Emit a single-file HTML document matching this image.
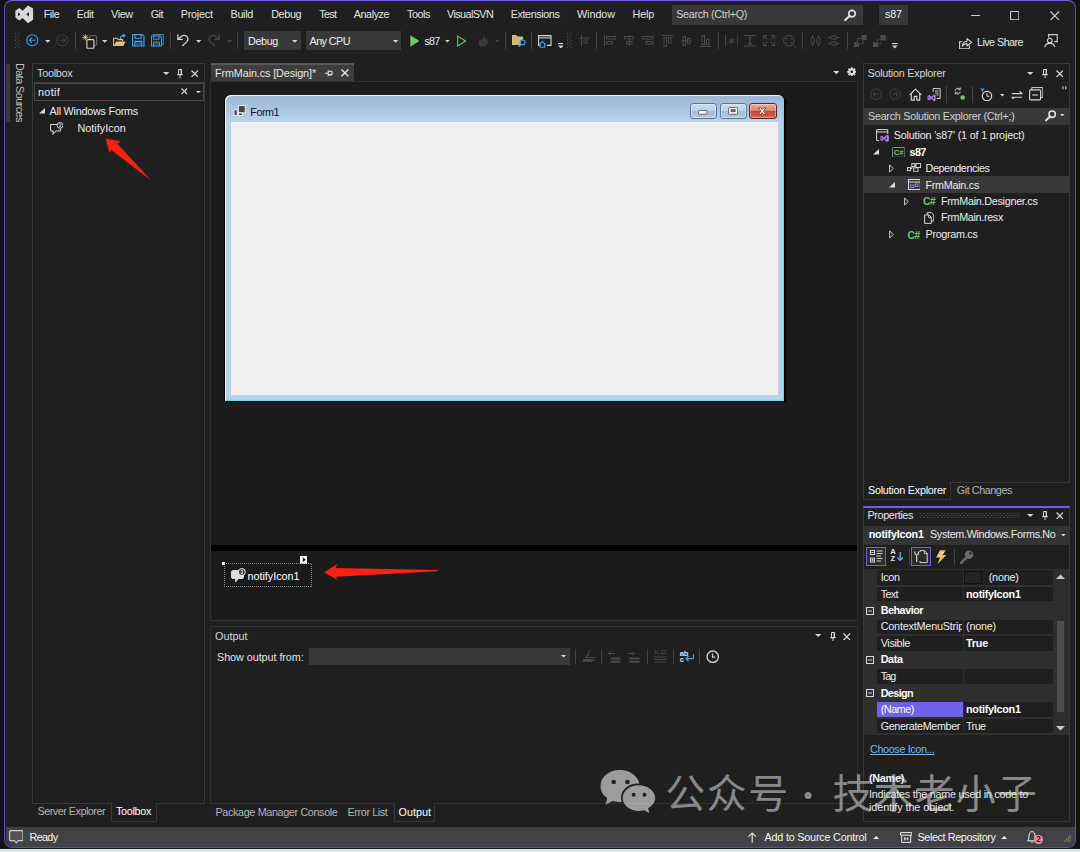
<!DOCTYPE html>
<html><head><meta charset="utf-8"><title>s87 - Microsoft Visual Studio</title>
<style>
html,body{margin:0;padding:0;}
body{width:1080px;height:852px;overflow:hidden;background:#131313;position:relative;font-family:"Liberation Sans","Noto Sans CJK SC",sans-serif;font-size:10.8px;}
div,span,svg{position:absolute;box-sizing:border-box;}
.t{white-space:pre;line-height:16px;height:16px;}
#strip{left:0;top:848.700px;width:1080px;height:3.300px;background:#d9e7ec;}
#win{left:4px;top:0;width:1072px;height:848px;background:#1f1f1f;border:1.600px solid #5b4eb8;border-top:1.200px solid #7160e8;border-radius:8px;}
.box{background:#383838;}
.pnl{border:1px solid #383838;background:#1f1f1f;}
.tab{border:1px solid #383838;border-top:none;background:#1f1f1f;}
.vsep{width:1px;background:#444;}
#status{left:5.5px;top:827px;width:1069px;height:19.6px;background:#424242;border-radius:0 0 6.5px 6.5px;}
.wm{font-family:"Liberation Sans","Noto Sans CJK SC",sans-serif;font-size:40px;line-height:56px;height:56px;white-space:pre;color:rgba(255,255,255,0.47);letter-spacing:1.700px;font-weight:400;}

</style></head>
<body>
<div id="strip"></div>
<div id="win"></div>
<div id="status"></div>

<!-- title bar -->
<div class="box" style="left:671.7px;top:5px;width:191.3px;height:19.5px"></div>
<div class="box" style="left:878.5px;top:5px;width:29.5px;height:19.5px"></div>
<!-- toolbar combos -->
<div class="box" style="left:243.7px;top:31px;width:57px;height:19px"></div>
<div class="box" style="left:306px;top:31px;width:95px;height:19px"></div>

<!-- left strip -->
<div style="left:5.700px;top:63.500px;width:4.400px;height:58.300px;background:#3a3a3a"></div>
<span class="t" style="left:12px;top:63.200px;color:#c4c4c4;transform-origin:0 0;transform:translate(16px,0) rotate(90deg);letter-spacing:-0.550px" id="ds">Data Sources</span>

<!-- toolbox -->
<div class="pnl" style="left:32px;top:63px;width:173px;height:741px"></div>
<div style="left:33px;top:82px;width:171px;height:1px;background:#3d3d3d"></div>
<div style="left:33.5px;top:83px;width:170.5px;height:17.5px;border:1px solid #464646;background:#1f1f1f"></div>
<div class="tab" style="left:110.5px;top:803px;width:46.5px;height:18.5px"></div>

<!-- document -->
<div style="left:211px;top:63px;width:143px;height:17.500px;background:linear-gradient(#585858 0,#585858 2px,#3d3d3d 2.300px,#3d3d3d 100%)"></div>
<div class="pnl" style="left:210px;top:80.500px;width:648px;height:540.500px;background:#1b1b1b;border-color:#303030"></div>
<div style="left:211px;top:544.5px;width:646px;height:6px;background:#000"></div>

<!-- Form1 -->
<div id="form" style="left:224.100px;top:94.800px;width:561.800px;height:307.200px;background:#000;border-radius:7px 7px 0 0;"></div>
<div style="left:225px;top:95px;width:559.400px;height:306.100px;border-radius:6px 6px 0 0;background:linear-gradient(#9cb6d6 0,#a8c1df 12px,#bcd2eb 26px,#b9d1ea 27px,#b9d1ea 100%);box-shadow:inset 1px 1px 0 rgba(255,255,255,0.800),inset -1.200px -1.200px 0 #6bd6f4;"></div>
<div style="left:230.900px;top:121.600px;width:547.400px;height:273.200px;background:#f0f0f0"></div>

<!-- output -->
<div class="pnl" style="left:210px;top:626px;width:648px;height:178px;border-color:#323232"></div>
<div class="box" style="left:309px;top:648px;width:261px;height:17px"></div>
<div class="tab" style="left:393.5px;top:803px;width:41.5px;height:18.5px"></div>

<!-- solution explorer -->
<div class="pnl" style="left:863px;top:63px;width:207px;height:420px"></div>
<div class="box" style="left:864px;top:108px;width:205px;height:17px"></div>
<div style="left:864px;top:176.2px;width:205px;height:16.4px;background:#383838"></div>
<div class="tab" style="left:863px;top:482px;width:88px;height:18px"></div>

<!-- properties -->
<div class="pnl" style="left:863px;top:506px;width:207px;height:316px;border-top:2px solid #7160e8"></div>
<div style="left:864px;top:525.5px;width:205px;height:19px;background:#333"></div>
<div id="grid" style="left:864px;top:569px;width:205px;height:166px;background:#2e2e2e"></div>
<div style="left:877px;top:570.0px;width:85.7px;height:14.7px;background:#1f1f1f"></div>
<div style="left:964px;top:570.0px;width:89px;height:14.7px;background:#1f1f1f"></div>
<div style="left:877px;top:586.5px;width:85.7px;height:14.7px;background:#1f1f1f"></div>
<div style="left:964px;top:586.5px;width:89px;height:14.7px;background:#1f1f1f"></div>
<svg style="left:866px;top:606.9px" width="8" height="8" viewBox="0 0 8 8"><rect x="0.5" y="0.5" width="7" height="7" fill="none" stroke="#d8d8d8" stroke-width="1"/><path d="M2 4H6" stroke="#d8d8d8" stroke-width="1"/></svg>
<div style="left:877px;top:619.5px;width:85.7px;height:14.7px;background:#1f1f1f"></div>
<div style="left:964px;top:619.5px;width:89px;height:14.7px;background:#1f1f1f"></div>
<div style="left:877px;top:636.0px;width:85.7px;height:14.7px;background:#1f1f1f"></div>
<div style="left:964px;top:636.0px;width:89px;height:14.7px;background:#1f1f1f"></div>
<svg style="left:866px;top:656.4px" width="8" height="8" viewBox="0 0 8 8"><rect x="0.5" y="0.5" width="7" height="7" fill="none" stroke="#d8d8d8" stroke-width="1"/><path d="M2 4H6" stroke="#d8d8d8" stroke-width="1"/></svg>
<div style="left:877px;top:669.0px;width:85.7px;height:14.7px;background:#1f1f1f"></div>
<div style="left:964px;top:669.0px;width:89px;height:14.7px;background:#1f1f1f"></div>
<svg style="left:866px;top:689.4px" width="8" height="8" viewBox="0 0 8 8"><rect x="0.5" y="0.5" width="7" height="7" fill="none" stroke="#d8d8d8" stroke-width="1"/><path d="M2 4H6" stroke="#d8d8d8" stroke-width="1"/></svg>
<div style="left:877px;top:702.0px;width:85.7px;height:14.7px;background:#7160e8"></div>
<div style="left:964px;top:702.0px;width:89px;height:14.7px;background:#1f1f1f"></div>
<div style="left:877px;top:718.5px;width:85.7px;height:14.7px;background:#1f1f1f"></div>
<div style="left:964px;top:718.5px;width:89px;height:14.7px;background:#1f1f1f"></div>
<div style="left:964.3px;top:570.6px;width:17.6px;height:13.6px;background:#222;border:1px solid #111"></div>
<svg style="left:1056px;top:574px" width="9" height="5" viewBox="0 0 9 5"><path d="M0 5L4.5 0.5L9 5Z" fill="#c8c8c8"/></svg>
<svg style="left:1056px;top:725.5px" width="9" height="5" viewBox="0 0 9 5"><path d="M0 0L4.5 4.5L9 0Z" fill="#c8c8c8"/></svg>
<div style="left:1056.8px;top:620.5px;width:6.8px;height:91px;background:#4d4d4d"></div>
<svg style="left:15.2px;top:5.1px" width="19" height="19" viewBox="0 0 19 19" ><path d="M0.4 5.8L4.4 3L7.6 5.8L13 0.5L18.1 3.5V14.8L13 18.2L7.6 12.9L4.4 15.5L0.4 12.5Z M3 7.3V11.4L5.3 9.3Z M13.9 6.9L11.3 9.3L13.9 11.8Z" fill="#d9d9d9" fill-rule="evenodd"/></svg>
<svg style="left:844px;top:9px" width="13" height="12" viewBox="0 0 13 12" ><circle cx="8" cy="4.6" r="3.3" fill="none" stroke="#e4e4e4" stroke-width="1.7"/><path d="M5.6 7L1.2 11" stroke="#e4e4e4" stroke-width="2.1" stroke-linecap="round"/></svg>
<svg style="left:970.5px;top:14.8px" width="9" height="1.2" viewBox="0 0 9 1.2" ><rect width="9" height="1.1" fill="#d0d0d0"/></svg>
<svg style="left:1010px;top:11px" width="9.4" height="9.4" viewBox="0 0 9.4 9.4" ><rect x="0.55" y="0.55" width="8.3" height="8.3" rx="0.6" fill="none" stroke="#d0d0d0" stroke-width="1.1"/></svg>
<svg style="left:1050px;top:10.8px" width="9.6" height="9.6" viewBox="0 0 9.6 9.6" ><path d="M0.5 0.5L9.1 9.1M9.1 0.5L0.5 9.1" stroke="#d0d0d0" stroke-width="1.1" fill="none"/></svg>
<svg style="left:15.3px;top:33px" width="5.2" height="15.2" viewBox="0 0 5.2 15.2" ><g fill="#4e4e4e"><rect x="0.00" y="0.00" width="1.1" height="1.1"/><rect x="3.60" y="0.00" width="1.1" height="1.1"/><rect x="1.80" y="1.75" width="1.1" height="1.1"/><rect x="0.00" y="3.50" width="1.1" height="1.1"/><rect x="3.60" y="3.50" width="1.1" height="1.1"/><rect x="1.80" y="5.25" width="1.1" height="1.1"/><rect x="0.00" y="7.00" width="1.1" height="1.1"/><rect x="3.60" y="7.00" width="1.1" height="1.1"/><rect x="1.80" y="8.75" width="1.1" height="1.1"/><rect x="0.00" y="10.50" width="1.1" height="1.1"/><rect x="3.60" y="10.50" width="1.1" height="1.1"/><rect x="1.80" y="12.25" width="1.1" height="1.1"/><rect x="0.00" y="14.00" width="1.1" height="1.1"/><rect x="3.60" y="14.00" width="1.1" height="1.1"/></g></svg>
<svg style="left:26.3px;top:34px" width="12.6" height="12.6" viewBox="0 0 12.6 12.6" ><circle cx="6.3" cy="6.3" r="5.5" fill="none" stroke="#459fe8" stroke-width="1.1"/><path d="M9.3 6.3H3.6M5.9 3.7L3.3 6.3L5.9 8.9" stroke="#459fe8" stroke-width="1.1" fill="none"/></svg>
<svg style="left:45px;top:40px" width="5.4" height="2.7" viewBox="0 0 5.4 2.7" ><path d="M0 0H5.4L2.7 2.7Z" fill="#d6d6d6"/></svg>
<svg style="left:55.7px;top:34px" width="12.6" height="12.6" viewBox="0 0 12.6 12.6" ><circle cx="6.3" cy="6.3" r="5.5" fill="none" stroke="#3e3e3e" stroke-width="1.1"/><path d="M3.3 6.3H9M6.7 3.7L9.3 6.3L6.7 8.9" stroke="#3e3e3e" stroke-width="1.1" fill="none"/></svg>
<div style="left:75px;top:32.3px;width:1px;height:16.700000000000003px;background:#444"></div>
<svg style="left:82px;top:33.5px" width="15.5" height="15" viewBox="0 0 15.5 15" ><rect x="7.6" y="1.8" width="7" height="9.2" rx="1" fill="none" stroke="#6a6a6a" stroke-width="1.1"/><rect x="4.9" y="5.6" width="7" height="8.6" rx="1" fill="#1f1f1f" stroke="#d6d6d6" stroke-width="1.1"/><path d="M3.3 0.3V6.3M0.3 3.3H6.3M1.2 1.2L5.4 5.4M5.4 1.2L1.2 5.4" stroke="#dcc07f" stroke-width="0.9"/></svg>
<svg style="left:101.8px;top:40px" width="5.4" height="2.7" viewBox="0 0 5.4 2.7" ><path d="M0 0H5.4L2.7 2.7Z" fill="#d6d6d6"/></svg>
<svg style="left:112.5px;top:33.5px" width="13.5" height="13" viewBox="0 0 13.5 13" ><path d="M0.6 12V4.3H4.2L5.4 5.6H9.6V7.2" fill="none" stroke="#dcc07f" stroke-width="1.1"/><path d="M0.7 12L3.2 7.4H12.6L10.3 12Z" fill="#dcc07f"/><path d="M7.6 5V3.6Q7.6 1.6 10 1.6H11.2M9.9 0L11.9 1.6L9.9 3.3" stroke="#459fe8" stroke-width="1.2" fill="none"/></svg>
<svg style="left:132px;top:34.4px" width="13" height="13" viewBox="0 0 13 13" ><path d="M0.6 0.6H10.4L12 2.2V12H0.6Z" fill="none" stroke="#459fe8" stroke-width="1.15"/><path d="M3 0.8V4.2H9.2V0.8M2.8 12V7.4H9.8V12" fill="none" stroke="#459fe8" stroke-width="1.1"/><rect x="3.4" y="8" width="5.8" height="3.6" fill="#459fe8" opacity="0.35"/></svg>
<svg style="left:150.8px;top:34.4px" width="13" height="13" viewBox="0 0 13 13" ><path d="M2.4 1.8V0.6H12.3V10.6H11" fill="none" stroke="#459fe8" stroke-width="1.1" opacity="0.75"/><g transform="translate(0,1.6) scale(0.87)"><path d="M0.6 0.6H10.4L12 2.2V12H0.6Z" fill="none" stroke="#459fe8" stroke-width="1.15"/><path d="M3 0.8V4.2H9.2V0.8M2.8 12V7.4H9.8V12" fill="none" stroke="#459fe8" stroke-width="1.1"/><rect x="3.4" y="8" width="5.8" height="3.6" fill="#459fe8" opacity="0.35"/></g></svg>
<div style="left:169.7px;top:32.3px;width:1px;height:16.700000000000003px;background:#444"></div>
<svg style="left:177.4px;top:34.3px" width="12" height="12.5" viewBox="0 0 12 12.5" ><g ><path d="M0.9 0.6V5.4H5.7" fill="none" stroke="#d6d6d6" stroke-width="1.25"/><path d="M1.2 5.2L4.2 2.5Q7 0.3 9.6 2.3Q12 4.6 9.9 7.6L5.2 12" fill="none" stroke="#d6d6d6" stroke-width="1.25"/></g></svg>
<svg style="left:196.2px;top:40px" width="5.4" height="2.7" viewBox="0 0 5.4 2.7" ><path d="M0 0H5.4L2.7 2.7Z" fill="#d6d6d6"/></svg>
<svg style="left:208.2px;top:34.3px" width="12" height="12.5" viewBox="0 0 12 12.5" ><g transform="translate(12,0) scale(-1,1)"><path d="M0.9 0.6V5.4H5.7" fill="none" stroke="#484848" stroke-width="1.25"/><path d="M1.2 5.2L4.2 2.5Q7 0.3 9.6 2.3Q12 4.6 9.9 7.6L5.2 12" fill="none" stroke="#484848" stroke-width="1.25"/></g></svg>
<svg style="left:226.8px;top:40px" width="5.4" height="2.7" viewBox="0 0 5.4 2.7" ><path d="M0 0H5.4L2.7 2.7Z" fill="#484848"/></svg>
<div style="left:237.3px;top:32.3px;width:1px;height:16.700000000000003px;background:#444"></div>
<svg style="left:292px;top:40px" width="5.4" height="2.7" viewBox="0 0 5.4 2.7" ><path d="M0 0H5.4L2.7 2.7Z" fill="#d6d6d6"/></svg>
<svg style="left:392.7px;top:40px" width="5.4" height="2.7" viewBox="0 0 5.4 2.7" ><path d="M0 0H5.4L2.7 2.7Z" fill="#d6d6d6"/></svg>
<svg style="left:409.5px;top:34.5px" width="9.6" height="12" viewBox="0 0 9.6 12" ><path d="M0.3 0.3L9.3 6L0.3 11.7Z" fill="#6cc96c"/></svg>
<svg style="left:445px;top:40px" width="4.8" height="2.5" viewBox="0 0 4.8 2.5" ><path d="M0 0H4.8L2.4 2.5Z" fill="#d6d6d6"/></svg>
<svg style="left:457.3px;top:34.5px" width="9.8" height="12" viewBox="0 0 9.8 12" ><path d="M0.7 1.1L8.6 6L0.7 10.9Z" fill="none" stroke="#6cc96c" stroke-width="1.1"/></svg>
<svg style="left:476.8px;top:34px" width="12" height="13" viewBox="0 0 12 13" ><path d="M6.2 0.4Q7.4 3 5.4 4.8Q4.4 5.8 4.6 7.2Q3.3 6.4 3.4 4.7Q0.7 7 1.4 9.7Q2.3 12.5 6 12.6Q10 12.4 10.7 8.8Q11.2 5.6 9 3.6Q9.1 5 8.2 5.6Q8.6 2.4 6.2 0.4Z" fill="#3a3a3a"/></svg>
<svg style="left:494.8px;top:40px" width="4.8" height="2.5" viewBox="0 0 4.8 2.5" ><path d="M0 0H4.8L2.4 2.5Z" fill="#484848"/></svg>
<div style="left:505.2px;top:32.3px;width:1px;height:16.700000000000003px;background:#444"></div>
<svg style="left:512.3px;top:35px" width="14" height="12.5" viewBox="0 0 14 12.5" ><path d="M0.5 10V0.6H4.4L5.6 2H10.6V10Z" fill="#dcc07f" opacity="0.95"/><path d="M0.5 10V0.6H4.4L5.6 2H10.6V4" fill="none" stroke="#dcc07f" stroke-width="1"/><circle cx="10.6" cy="7.4" r="2.4" fill="#1f1f1f" stroke="#459fe8" stroke-width="1.2"/><path d="M8.9 9.2L6.6 11.8" stroke="#459fe8" stroke-width="1.4"/></svg>
<div style="left:531.2px;top:32.3px;width:1px;height:16.700000000000003px;background:#444"></div>
<svg style="left:537.8px;top:35.3px" width="14" height="13" viewBox="0 0 14 13" ><path d="M3 10.4H0.6V0.6H13V10.4H9" fill="none" stroke="#d6d6d6" stroke-width="1.1"/><path d="M0.6 2.9H13" stroke="#d6d6d6" stroke-width="1"/><path d="M1.2 9.5L4.4 6.6L7.6 9.5M2.1 8.9V12.3H6.7V8.9" fill="#1f1f1f" stroke="#459fe8" stroke-width="1.1"/></svg>
<svg style="left:557.5px;top:42.8px" width="5.6" height="5.6" viewBox="0 0 5.6 5.6" ><rect x="0" y="0" width="5.6" height="1.1" fill="#d6d6d6"/><path d="M0 2.6H5.6L2.8 5.5Z" fill="#d6d6d6"/></svg>
<svg style="left:566.8px;top:33px" width="5.2" height="15.2" viewBox="0 0 5.2 15.2" ><g fill="#4e4e4e"><rect x="0.00" y="0.00" width="1.1" height="1.1"/><rect x="3.60" y="0.00" width="1.1" height="1.1"/><rect x="1.80" y="1.75" width="1.1" height="1.1"/><rect x="0.00" y="3.50" width="1.1" height="1.1"/><rect x="3.60" y="3.50" width="1.1" height="1.1"/><rect x="1.80" y="5.25" width="1.1" height="1.1"/><rect x="0.00" y="7.00" width="1.1" height="1.1"/><rect x="3.60" y="7.00" width="1.1" height="1.1"/><rect x="1.80" y="8.75" width="1.1" height="1.1"/><rect x="0.00" y="10.50" width="1.1" height="1.1"/><rect x="3.60" y="10.50" width="1.1" height="1.1"/><rect x="1.80" y="12.25" width="1.1" height="1.1"/><rect x="0.00" y="14.00" width="1.1" height="1.1"/><rect x="3.60" y="14.00" width="1.1" height="1.1"/></g></svg>
<svg style="left:578.5px;top:35px" width="11" height="11" viewBox="0 0 11 11" ><g fill="none" stroke="#4b4b4b" stroke-width="1"><path d="M2.5 0V11M0 3H11"/><rect x="5" y="5" width="3" height="3"/></g></svg>
<div style="left:596.3px;top:32.3px;width:1px;height:16.700000000000003px;background:#444"></div>
<svg style="left:603.5px;top:35px" width="12.5" height="11" viewBox="0 0 12.5 11" ><g fill="none" stroke="#4b4b4b" stroke-width="1"><path d="M0.5 0V11"/><rect x="2.5" y="1.5" width="9.5" height="2.5"/><rect x="2.5" y="6.5" width="6" height="2.5"/></g></svg>
<svg style="left:623.5px;top:35px" width="10.5" height="11" viewBox="0 0 10.5 11" ><g fill="none" stroke="#4b4b4b" stroke-width="1"><path d="M5.2 0V11"/><rect x="0.5" y="1.5" width="9.5" height="2.5"/><rect x="2.5" y="6.5" width="5.5" height="2.5"/></g></svg>
<svg style="left:641.8px;top:35px" width="12.5" height="11" viewBox="0 0 12.5 11" ><g fill="none" stroke="#4b4b4b" stroke-width="1"><path d="M12 0V11"/><rect x="0.5" y="1.5" width="9.5" height="2.5"/><rect x="4" y="6.5" width="6" height="2.5"/></g></svg>
<svg style="left:661.7px;top:34.5px" width="11" height="12" viewBox="0 0 11 12" ><g fill="none" stroke="#4b4b4b" stroke-width="1"><path d="M0 0.5H11"/><rect x="2" y="2.5" width="2.5" height="9"/><rect x="6.5" y="2.5" width="2.5" height="5.5"/></g></svg>
<svg style="left:681.3px;top:34.5px" width="11" height="12" viewBox="0 0 11 12" ><g fill="none" stroke="#4b4b4b" stroke-width="1"><path d="M0 6H11"/><rect x="2" y="1.5" width="2.5" height="9"/><rect x="6.5" y="3.5" width="2.5" height="5"/></g></svg>
<svg style="left:699.8px;top:34.5px" width="11" height="12" viewBox="0 0 11 12" ><g fill="none" stroke="#4b4b4b" stroke-width="1"><path d="M0 11.5H11"/><rect x="2" y="0.5" width="2.5" height="9"/><rect x="6.5" y="4" width="2.5" height="5.5"/></g></svg>
<div style="left:718.2px;top:32.3px;width:1px;height:16.700000000000003px;background:#444"></div>
<svg style="left:724.8px;top:35px" width="13.4" height="11.5" viewBox="0 0 13.4 11.5" ><g fill="none" stroke="#4b4b4b" stroke-width="1"><path d="M0.5 0V11.5M12.9 0V11.5M6.7 2.5V9M3.9 4.2L9.5 7.4M9.5 4.2L3.9 7.4"/></g></svg>
<svg style="left:744px;top:35.3px" width="12" height="11.4" viewBox="0 0 12 11.4" ><g fill="none" stroke="#4b4b4b" stroke-width="1"><path d="M0 0.5H12M0 10.9H12M6 1.5V10M4 3.5L6 1.5L8 3.5M4 8L6 10L8 8"/></g></svg>
<svg style="left:763.2px;top:35px" width="12.2" height="11" viewBox="0 0 12.2 11" ><g fill="none" stroke="#4b4b4b" stroke-width="1"><path d="M0.5 4V0.5H4M8.2 0.5H11.7V4M11.7 7V10.5H8.2M4 10.5H0.5V7M1 1L4.3 4.3M11.2 1L7.9 4.3M1 10L4.3 6.7M11.2 10L7.9 6.7"/></g></svg>
<svg style="left:782.8px;top:34.5px" width="13.2" height="13" viewBox="0 0 13.2 13" ><g fill="none" stroke="#4b4b4b" stroke-width="1"><circle cx="5.8" cy="5.8" r="5.2"/><path d="M9.6 9.6L13 13M3.4 4.6V3.4H4.6M7 3.4H8.2V4.6M8.2 7V8.2H7M4.6 8.2H3.4V7"/></g></svg>
<div style="left:801.7px;top:32.3px;width:1px;height:16.700000000000003px;background:#444"></div>
<svg style="left:809.8px;top:34.5px" width="11" height="11.5" viewBox="0 0 11 11.5" ><g fill="none" stroke="#4b4b4b" stroke-width="1"><rect x="1" y="2.5" width="3" height="6.5" rx="1"/><rect x="7" y="2.5" width="3" height="6.5" rx="1"/><path d="M2.5 0V2.5M2.5 9V11.5M8.5 0V2.5M8.5 9V11.5"/></g></svg>
<svg style="left:828px;top:34.8px" width="11.5" height="11" viewBox="0 0 11.5 11" ><g fill="none" stroke="#4b4b4b" stroke-width="1"><rect x="2.5" y="1" width="6.5" height="3" rx="1"/><rect x="2.5" y="7" width="6.5" height="3" rx="1"/><path d="M0 2.5H2.5M9 2.5H11.5M0 8.500H2.5M9 8.5H11.5"/></g></svg>
<div style="left:846.6px;top:32.3px;width:1px;height:16.700000000000003px;background:#444"></div>
<svg style="left:853.6px;top:34.5px" width="13" height="12.5" viewBox="0 0 13 12.5" ><rect x="0" y="7.2" width="5" height="5" fill="#4b4b4b"/><rect x="7.6" y="0" width="5" height="5" fill="#4b4b4b"/><rect x="3.6" y="3.6" width="5.4" height="5.4" fill="#1f1f1f" stroke="#4b4b4b" stroke-width="1"/></svg>
<svg style="left:872.6px;top:34.5px" width="13" height="12.5" viewBox="0 0 13 12.5" ><rect x="0" y="7.2" width="5.4" height="5.4" fill="#4b4b4b"/><rect x="7.4" y="0" width="5.4" height="5.4" fill="#4b4b4b"/><path d="M4.5 6V4.5H6M7.5 7.500V9H6" fill="none" stroke="#4b4b4b" stroke-width="0.9"/></svg>
<svg style="left:892.2px;top:43px" width="5.6" height="5.6" viewBox="0 0 5.6 5.6" ><rect x="0" y="0" width="5.6" height="1.1" fill="#d6d6d6"/><path d="M0 2.6H5.6L2.8 5.5Z" fill="#d6d6d6"/></svg>
<svg style="left:958.6px;top:36.8px" width="13.6" height="12.4" viewBox="0 0 13.6 12.4" ><path d="M3.4 4.8H0.6V11.8H10.4V8.6" fill="none" stroke="#d6d6d6" stroke-width="1.1"/><path d="M3.3 9.3Q3.8 4.6 8 4.3V1.6L12.6 5.3L8 9V6.6Q5 6.5 3.3 9.300Z" fill="none" stroke="#d6d6d6" stroke-width="1.1" stroke-linejoin="round"/></svg>
<svg style="left:1044px;top:34.3px" width="14" height="13.5" viewBox="0 0 14 13.5" ><path d="M4.6 3.6V0.6H13.2V7.6H10.3" fill="none" stroke="#d6d6d6" stroke-width="1.1"/><circle cx="5.8" cy="6.6" r="2.3" fill="#1f1f1f" stroke="#d6d6d6" stroke-width="1.1"/><path d="M0.8 13.2Q1.4 9.4 5.8 9.4Q10.2 9.4 10.800 13.2" fill="none" stroke="#d6d6d6" stroke-width="1.1"/></svg>
<svg style="left:162.5px;top:71.7px" width="6.4" height="3" viewBox="0 0 6.4 3" ><path d="M0 0H6.4L3.2 3Z" fill="#d6d6d6"/></svg>
<svg style="left:177.2px;top:69px" width="6" height="9.5" viewBox="0 0 6 9.5" ><path d="M1.5 0.5H4.5V5.5H1.5ZM0 5.7H6M3 5.7V9.5" stroke="#d6d6d6" stroke-width="1" fill="none"/><path d="M3.6 0.5H4.6V5.5H3.6Z" fill="#d6d6d6"/></svg>
<svg style="left:190.8px;top:69.9px" width="7.6" height="7.6" viewBox="0 0 7.6 7.6" ><path d="M0.5 0.5L7.1 7.1M7.1 0.5L0.5 7.1" stroke="#d6d6d6" stroke-width="1.25" fill="none"/></svg>
<svg style="left:1027.3px;top:71.5px" width="6.4" height="3" viewBox="0 0 6.4 3" ><path d="M0 0H6.4L3.2 3Z" fill="#d6d6d6"/></svg>
<svg style="left:1041.7px;top:68.8px" width="6" height="9.5" viewBox="0 0 6 9.5" ><path d="M1.5 0.5H4.5V5.5H1.5ZM0 5.7H6M3 5.7V9.5" stroke="#d6d6d6" stroke-width="1" fill="none"/><path d="M3.6 0.5H4.6V5.5H3.6Z" fill="#d6d6d6"/></svg>
<svg style="left:1055.5px;top:69.7px" width="7.6" height="7.6" viewBox="0 0 7.6 7.6" ><path d="M0.5 0.5L7.1 7.1M7.1 0.5L0.5 7.1" stroke="#d6d6d6" stroke-width="1.25" fill="none"/></svg>
<svg style="left:1027.3px;top:513.5px" width="6.4" height="3" viewBox="0 0 6.4 3" ><path d="M0 0H6.4L3.2 3Z" fill="#d6d6d6"/></svg>
<svg style="left:1041.7px;top:510.8px" width="6" height="9.5" viewBox="0 0 6 9.5" ><path d="M1.5 0.5H4.5V5.5H1.5ZM0 5.7H6M3 5.7V9.5" stroke="#d6d6d6" stroke-width="1" fill="none"/><path d="M3.6 0.5H4.6V5.5H3.6Z" fill="#d6d6d6"/></svg>
<svg style="left:1055.5px;top:511.7px" width="7.6" height="7.6" viewBox="0 0 7.6 7.6" ><path d="M0.5 0.5L7.1 7.1M7.1 0.5L0.5 7.1" stroke="#d6d6d6" stroke-width="1.25" fill="none"/></svg>
<svg style="left:815.3px;top:634.3000000000001px" width="6.4" height="3" viewBox="0 0 6.4 3" ><path d="M0 0H6.4L3.2 3Z" fill="#d6d6d6"/></svg>
<svg style="left:829.8px;top:631.6px" width="6" height="9.5" viewBox="0 0 6 9.5" ><path d="M1.5 0.5H4.5V5.5H1.5ZM0 5.7H6M3 5.7V9.5" stroke="#d6d6d6" stroke-width="1" fill="none"/><path d="M3.6 0.5H4.6V5.5H3.6Z" fill="#d6d6d6"/></svg>
<svg style="left:843.2px;top:632.5px" width="7.6" height="7.6" viewBox="0 0 7.6 7.6" ><path d="M0.5 0.5L7.1 7.1M7.1 0.5L0.5 7.1" stroke="#d6d6d6" stroke-width="1.25" fill="none"/></svg>
<svg style="left:181.4px;top:88.2px" width="6.6" height="6.6" viewBox="0 0 6.6 6.6" ><path d="M0.5 0.5L6.1 6.1M6.1 0.5L0.5 6.1" stroke="#d6d6d6" stroke-width="1.15" fill="none"/></svg>
<svg style="left:195.5px;top:90.7px" width="5" height="2.3" viewBox="0 0 5 2.3" ><path d="M0 0H5L2.5 2.3Z" fill="#d6d6d6"/></svg>
<svg style="left:39px;top:108.4px" width="6" height="5.6" viewBox="0 0 6 5.6" ><path d="M6 0V5.600H0Z" fill="#d8d8d8"/></svg>
<svg style="left:50px;top:122px" width="13.4" height="13" viewBox="0 0 13.4 13" ><path d="M7 2.4H1.6Q0.600 2.400 0.600 3.400V8Q0.600 9 1.600 9H3V12L6 9H9.4Q10.400 9 10.400 8V7" fill="none" stroke="#d6d6d6" stroke-width="1.05"/><circle cx="10" cy="3.4" r="2.9" fill="#1f1f1f" stroke="#d6d6d6" stroke-width="1"/><path d="M9 2.700Q9.100 1.800 10 1.800Q11 1.800 11 2.600Q11 3.200 9.200 4.800H11.200" fill="none" stroke="#d6d6d6" stroke-width="0.8"/></svg>
<svg style="left:325px;top:70.2px" width="7.6" height="6.6" viewBox="0 0 7.6 6.6" ><path d="M0 3.2H3.200M3.200 0.300V6.200M3.200 1.300H7V5H3.200" fill="none" stroke="#e8e8e8" stroke-width="1"/><path d="M3.2 4.200H7V5H3.200Z" fill="#e8e8e8"/></svg>
<svg style="left:341px;top:69.3px" width="7.8" height="7.8" viewBox="0 0 7.8 7.8" ><path d="M0.5 0.5L7.3 7.3M7.3 0.5L0.5 7.3" stroke="#ececec" stroke-width="1.3" fill="none"/></svg>
<svg style="left:832.6px;top:71.2px" width="6.6" height="3.2" viewBox="0 0 6.6 3.2" ><path d="M0 0H6.6L3.3 3.2Z" fill="#d6d6d6"/></svg>
<svg style="left:846.7px;top:66.6px" width="9.6" height="9.6" viewBox="0 0 9.6 9.6" ><circle cx="4.800" cy="4.800" r="2.450" fill="none" stroke="#d6d6d6" stroke-width="2.300"/><g stroke="#d6d6d6" stroke-width="1.700"><path d="M4.800 0.200V2M4.800 7.600V9.400M0.200 4.800H2M7.600 4.800H9.400M1.550 1.550L2.800 2.800M6.800 6.800L8.050 8.050M8.050 1.550L6.800 2.800M1.550 8.050L2.800 6.800"/></g></svg>
<svg style="left:233.3px;top:105px" width="13" height="12" viewBox="0 0 13 12" ><g stroke="#f4f4f4" stroke-width="0.9" fill="#444"><rect x="5.400" y="0.600" width="6.800" height="7.200"/><rect x="1" y="4.800" width="3.200" height="5.600"/><rect x="5.600" y="8" width="3.800" height="2.600"/></g></svg>
<div style="left:690.3px;top:103.2px;width:27.2px;height:15.6px;border:1px solid #62768f;border-radius:3px;background:linear-gradient(#cbdbee 0,#bccfe7 46%,#a3bcd9 50%,#b4cae4 100%);box-shadow:inset 0 0 0 0.8px rgba(255,255,255,0.45)"></div>
<div style="left:719.6px;top:103.2px;width:27.1px;height:15.6px;border:1px solid #62768f;border-radius:3px;background:linear-gradient(#cbdbee 0,#bccfe7 46%,#a3bcd9 50%,#b4cae4 100%);box-shadow:inset 0 0 0 0.8px rgba(255,255,255,0.45)"></div>
<div style="left:749px;top:103.2px;width:28px;height:15.6px;border:1px solid #5c2430;border-radius:3px;background:linear-gradient(#e6b0a4 0,#dc8876 46%,#c7432c 50%,#d9694f 100%);box-shadow:inset 0 0 0 0.8px rgba(255,255,255,0.45)"></div>
<svg style="left:698.4px;top:110px" width="9.6" height="4.8" viewBox="0 0 9.6 4.8" ><rect x="0.500" y="0.500" width="8.600" height="3.800" rx="1" fill="#f4f4f4" stroke="#55606e" stroke-width="0.9"/></svg>
<svg style="left:728px;top:107px" width="10.2" height="7.8" viewBox="0 0 10.2 7.8" ><rect x="0.500" y="0.500" width="9.200" height="6.800" rx="1" fill="#f4f4f4" stroke="#55606e" stroke-width="0.900"/><rect x="3" y="2.600" width="4.200" height="2.200" fill="#55709a" stroke="#3c4a64" stroke-width="0.600"/></svg>
<svg style="left:757.3px;top:106.8px" width="10.4" height="8.2" viewBox="0 0 10.4 8.2" ><path d="M1.400 0.800H3.900L5.200 2.600L6.500 0.800H9L6.500 4.100L9 7.400H6.500L5.200 5.600L3.900 7.400H1.400L3.900 4.100Z" fill="#f8f8f8" stroke="#6a3030" stroke-width="0.800" stroke-linejoin="round"/></svg>
<div style="left:223.700px;top:563.200px;width:88px;height:23.400px;background-image:linear-gradient(90deg,#a8a8a8 50%,transparent 50%),linear-gradient(90deg,#a8a8a8 50%,transparent 50%),linear-gradient(0deg,#a8a8a8 50%,transparent 50%),linear-gradient(0deg,#a8a8a8 50%,transparent 50%);background-size:2px 1px,2px 1px,1px 2px,1px 2px;background-position:0 0,0 100%,0 0,100% 0;background-repeat:repeat-x,repeat-x,repeat-y,repeat-y;opacity:0.800"></div>
<div style="left:222.200px;top:561.800px;width:3px;height:3px;background:#fff"></div>
<svg style="left:299.7px;top:556.2px" width="7.6" height="7.6" viewBox="0 0 7.6 7.6" ><rect width="7.600" height="7.600" fill="#fff"/><path d="M2.800 1.500L5.800 3.800L2.800 6.100Z" fill="#000"/></svg>
<svg style="left:230.6px;top:567.8px" width="15" height="14.5" viewBox="0 0 15 14.5" ><path d="M2 2.500H11Q12.500 2.500 12.500 4V9Q12.500 10.500 11 10.500H7.500L4.600 13.800V10.500H2Q0.500 10.500 0.500 9V4Q0.500 2.500 2 2.500Z" fill="#dcdcdc" stroke="#f4f4f4" stroke-width="0.800"/><circle cx="10.800" cy="4" r="3.500" fill="#333" stroke="#f4f4f4" stroke-width="1"/><path d="M9.800 3.300Q9.900 2.300 10.800 2.300Q11.800 2.300 11.800 3.100Q11.800 3.700 10 5.500H12" fill="none" stroke="#f0f0f0" stroke-width="0.800"/></svg>
<svg style="left:561.3px;top:655.4px" width="5.2" height="2.6" viewBox="0 0 5.2 2.6" ><path d="M0 0H5.2L2.6 2.6Z" fill="#d6d6d6"/></svg>
<div style="left:575.3px;top:649.2px;width:1px;height:15.199999999999932px;background:#444"></div>
<svg style="left:582.5px;top:650px" width="12.5" height="13" viewBox="0 0 12.5 13" ><g fill="none" stroke="#4b4b4b" stroke-width="1"><path d="M3.500 7V5.500H5.500V2.500Q5.500 0.500 7.500 0.500M2 7.500H12M0.500 10H12" /><rect x="0.500" y="9.500" width="8.500" height="2" fill="#4b4b4b"/></g></svg>
<div style="left:601.3px;top:649.2px;width:1px;height:15.199999999999932px;background:#444"></div>
<svg style="left:608px;top:650.5px" width="12.5" height="12.5" viewBox="0 0 12.5 12.5" ><g fill="none" stroke="#4b4b4b" stroke-width="1"><path d="M0.500 2.500H7M2.500 0.500L0.500 2.500L2.500 4.500"/><rect x="3" y="7" width="9" height="1" fill="#4b4b4b"/><rect x="3" y="10.200" width="9" height="1" fill="#4b4b4b"/></g></svg>
<svg style="left:627px;top:650.5px" width="12.5" height="12.5" viewBox="0 0 12.5 12.5" ><g fill="none" stroke="#4b4b4b" stroke-width="1"><path d="M1 2.500H7.500M5.500 0.500L7.500 2.500L5.500 4.500"/><rect x="3" y="7" width="9" height="1" fill="#4b4b4b"/><rect x="3" y="10.200" width="9" height="1" fill="#4b4b4b"/></g></svg>
<div style="left:646.7px;top:649.2px;width:1px;height:15.199999999999932px;background:#444"></div>
<svg style="left:654.2px;top:650px" width="12.5" height="13" viewBox="0 0 12.5 13" ><g fill="none" stroke="#4b4b4b" stroke-width="1"><path d="M0.500 0.500L4.500 4.500M4.500 0.500L0.500 4.500M6.500 1H12.500M6.500 3.500H12.500M0 7H12.500M0 9.500H12.500M0 12H12.500"/></g></svg>
<div style="left:672.5px;top:649.2px;width:1px;height:15.199999999999932px;background:#444"></div>
<span class="t" style="left:679.800px;top:649.200px;font-size:7.500px;font-weight:bold;color:#e0e0e0;letter-spacing:-0.200px;line-height:10px;height:10px">ab</span>
<span class="t" style="left:679.800px;top:654.600px;font-size:7.500px;font-weight:bold;color:#e0e0e0;line-height:10px;height:10px">c</span>
<svg style="left:684.5px;top:654.2px" width="9.5" height="8.5" viewBox="0 0 9.5 8.5" ><path d="M8.600 0V4.600H1.200M3.600 2L1 4.600L3.600 7.200" fill="none" stroke="#459fe8" stroke-width="1.300"/></svg>
<div style="left:698.7px;top:649.2px;width:1px;height:15.199999999999932px;background:#444"></div>
<svg style="left:705.8px;top:649.6px" width="13.4" height="13.4" viewBox="0 0 13.4 13.4" ><circle cx="6.700" cy="6.700" r="5.700" fill="none" stroke="#cfcfcf" stroke-width="1.400"/><path d="M6.500 3.500V7.200H9.200" fill="none" stroke="#cfcfcf" stroke-width="1.200"/></svg>
<svg style="left:870.3px;top:88.3px" width="12.2" height="12.2" viewBox="0 0 12.2 12.2" ><circle cx="6.100" cy="6.100" r="5.300" fill="none" stroke="#414141" stroke-width="1"/><path d="M9 6.100H3.300M5.600 3.600L3.100 6.100L5.600 8.600" stroke="#414141" stroke-width="1" fill="none"/></svg>
<svg style="left:888.9px;top:88.3px" width="12.2" height="12.2" viewBox="0 0 12.2 12.2" ><circle cx="6.100" cy="6.100" r="5.300" fill="none" stroke="#414141" stroke-width="1"/><path d="M3.300 6.100H9M6.700 3.600L9.200 6.100L6.700 8.600" stroke="#414141" stroke-width="1" fill="none"/></svg>
<svg style="left:908.5px;top:88px" width="13" height="12.8" viewBox="0 0 13 12.8" ><path d="M0.700 6.900L6.500 1.100L12.300 6.900M2.300 5.800V12.200H5.200V8.400H7.800V12.200H10.700V5.800" fill="none" stroke="#d6d6d6" stroke-width="1.150" stroke-linejoin="round"/></svg>
<svg style="left:927px;top:88px" width="14" height="14" viewBox="0 0 14 14" ><path d="M6.200 4V0.600H13.200V10.400H9.600" fill="none" stroke="#d6d6d6" stroke-width="1"/><path d="M8 3H11.600M8 5H11.600M9.500 7H11.600" stroke="#d6d6d6" stroke-width="0.900"/><path d="M0.500 8L2.300 7L4.300 8.800L7 6.200L8.600 7V12.500L7 13.400L4.300 10.800L2.300 12.500L0.500 11.600Z M1.600 8.800V10.800L2.900 9.800Z M7 8.300L5.300 9.800L7 11.300Z" fill="#a77be6" fill-rule="evenodd"/></svg>
<div style="left:946.2px;top:86.4px;width:1px;height:16.39999999999999px;background:#444"></div>
<svg style="left:953.5px;top:87.4px" width="12" height="13" viewBox="0 0 12 13" ><path d="M1.300 3.800A2.700 2.700 0 0 1 6 2.200M6.200 4.800A2.700 2.700 0 0 1 1.500 6" fill="none" stroke="#d6d6d6" stroke-width="1"/><path d="M6.300 0.400V2.700H4M1.200 7.600V5.300H3.500" fill="none" stroke="#d6d6d6" stroke-width="0.800"/><circle cx="8.700" cy="10.500" r="2.300" fill="#6cc96c"/></svg>
<div style="left:972.3px;top:86.4px;width:1px;height:16.39999999999999px;background:#444"></div>
<svg style="left:980.4px;top:87.6px" width="13" height="13.5" viewBox="0 0 13 13.5" ><circle cx="7" cy="8" r="4.700" fill="none" stroke="#d6d6d6" stroke-width="1.150"/><path d="M7 5.300V8.300H9.300" fill="none" stroke="#d6d6d6" stroke-width="1"/><path d="M0.200 0.500H4.600L3 2.500V4.300L1.800 3.600V2.500Z" fill="#459fe8"/></svg>
<svg style="left:999.6px;top:94.1px" width="4.8" height="2.5" viewBox="0 0 4.8 2.5" ><path d="M0 0H4.8L2.4 2.5Z" fill="#d6d6d6"/></svg>
<svg style="left:1010.6px;top:90.6px" width="12" height="8.8" viewBox="0 0 12 8.8" ><path d="M0.800 2.600H11.400M8.600 0.300L11.400 2.600M11.200 6.200H0.600M3.400 8.500L0.600 6.200" fill="none" stroke="#d6d6d6" stroke-width="1.100"/></svg>
<svg style="left:1029px;top:87.2px" width="14.4" height="13.6" viewBox="0 0 14.4 13.6" ><path d="M2.800 2.800V0.600H13.800V10.400H11.600" fill="none" stroke="#d6d6d6" stroke-width="1"/><rect x="0.600" y="2.900" width="11" height="10" rx="1" fill="#1f1f1f" stroke="#d6d6d6" stroke-width="1.150"/><path d="M3.300 8H9" stroke="#d6d6d6" stroke-width="1.100"/></svg>
<svg style="left:1061.8px;top:86.2px" width="5" height="3.4" viewBox="0 0 5 3.4" ><path d="M0.900 0.200V3.200M3.800 0.200V3.200" stroke="#d6d6d6" stroke-width="1.100"/></svg>
<svg style="left:1044.6px;top:110.4px" width="11.4" height="11.4" viewBox="0 0 11.4 11.4" ><circle cx="7.200" cy="4.200" r="3.200" fill="none" stroke="#e4e4e4" stroke-width="1.600"/><path d="M5 6.500L1 10.400" stroke="#e4e4e4" stroke-width="2" stroke-linecap="round"/></svg>
<svg style="left:1060.2px;top:114.1px" width="4.6" height="2.4" viewBox="0 0 4.6 2.4" ><path d="M0 0H4.6L2.3 2.4Z" fill="#d6d6d6"/></svg>
<svg style="left:876.4px;top:129px" width="13.4" height="13" viewBox="0 0 13.4 13" ><path d="M0.600 9.600V0.600H11.800V5.200" fill="none" stroke="#d6d6d6" stroke-width="1"/><path d="M0.600 3H11.800" stroke="#d6d6d6" stroke-width="1"/><path d="M0.600 9.600V11.400H3" fill="none" stroke="#d6d6d6" stroke-width="1"/><path d="M4.400 7.600L6 6.800L8 8.600L10.900 5.800L12.900 6.700V12L10.900 13L8 10.300L6 12L4.400 11.300Z M5.400 8.600V10.400L6.600 9.500Z M10.900 8L9.100 9.500L10.900 11Z" fill="#a77be6" fill-rule="evenodd"/></svg>
<svg style="left:873.3px;top:149.4px" width="6" height="5.6" viewBox="0 0 6 5.6" ><path d="M6 0V5.600H0Z" fill="#d8d8d8"/></svg>
<svg style="left:891.7px;top:146.5px" width="13.4" height="10.8" viewBox="0 0 13.4 10.8" ><rect x="0.500" y="0.500" width="12.400" height="9.800" rx="1" fill="none" stroke="#8a8a8a" stroke-width="1"/></svg>
<span class="t" style="left:893.800px;top:144.600px;font-size:7.800px;font-weight:bold;color:#6cc96c;letter-spacing:-0.300px">C#</span>
<svg style="left:888.8px;top:163.5px" width="5" height="9" viewBox="0 0 5 9" ><path d="M0.6 0.9L4.2 4.5L0.6 8.100Z" fill="none" stroke="#d0d0d0" stroke-width="1"/></svg>
<svg style="left:907px;top:162.8px" width="14.2" height="9.4" viewBox="0 0 14.2 9.4" ><g fill="none" stroke="#d6d6d6" stroke-width="1"><rect x="0.500" y="4.600" width="3" height="3"/><rect x="4.800" y="0.600" width="3" height="3"/><rect x="9" y="0.500" width="4.600" height="4"/><rect x="6.800" y="4.800" width="4.200" height="4"/><path d="M3.500 5.500H5V3.600M7.800 2.500H9"/></g></svg>
<svg style="left:888.7px;top:182.1px" width="6" height="5.6" viewBox="0 0 6 5.6" ><path d="M6 0V5.600H0Z" fill="#d8d8d8"/></svg>
<svg style="left:907.6px;top:178.9px" width="12.8" height="11" viewBox="0 0 12.8 11" ><rect x="0.500" y="0.500" width="11.800" height="10" fill="none" stroke="#d6d6d6" stroke-width="1"/><path d="M0.500 3H12.300" stroke="#d6d6d6" stroke-width="1"/><rect x="2.400" y="6" width="3.400" height="2.600" fill="none" stroke="#a77be6" stroke-width="0.900"/><rect x="7.400" y="5" width="2.600" height="2.600" fill="none" stroke="#a77be6" stroke-width="0.900"/></svg>
<svg style="left:903.9px;top:196.7px" width="5" height="9" viewBox="0 0 5 9" ><path d="M0.6 0.9L4.2 4.5L0.6 8.100Z" fill="none" stroke="#d0d0d0" stroke-width="1"/></svg>
<span class="t" style="left:923px;top:194.200px;font-size:10.200px;font-weight:bold;color:#6cc96c;letter-spacing:-0.400px">C#</span>
<svg style="left:923.8px;top:212px" width="10.4" height="12" viewBox="0 0 10.4 12" ><path d="M3.200 2.800V0.600H7.400L9.800 3V9H7.400" fill="none" stroke="#d6d6d6" stroke-width="1"/><path d="M0.600 2.900H5L7.300 5.200V11.400H0.600Z" fill="#1f1f1f" stroke="#d6d6d6" stroke-width="1"/><path d="M4.600 3.100V5.600H7" fill="none" stroke="#d6d6d6" stroke-width="0.900"/></svg>
<svg style="left:888.8px;top:229.5px" width="5" height="9" viewBox="0 0 5 9" ><path d="M0.6 0.9L4.2 4.5L0.6 8.100Z" fill="none" stroke="#d0d0d0" stroke-width="1"/></svg>
<span class="t" style="left:907.600px;top:227.500px;font-size:10.200px;font-weight:bold;color:#6cc96c;letter-spacing:-0.400px">C#</span>
<svg style="left:920px;top:512.9px" width="100.5" height="5.2" viewBox="0 0 100.5 5.2" ><g fill="#555"><rect x="0.00" y="0.00" width="1.1" height="1.1"/><rect x="3.47" y="0.00" width="1.1" height="1.1"/><rect x="6.94" y="0.00" width="1.1" height="1.1"/><rect x="10.41" y="0.00" width="1.1" height="1.1"/><rect x="13.88" y="0.00" width="1.1" height="1.1"/><rect x="17.35" y="0.00" width="1.1" height="1.1"/><rect x="20.82" y="0.00" width="1.1" height="1.1"/><rect x="24.29" y="0.00" width="1.1" height="1.1"/><rect x="27.76" y="0.00" width="1.1" height="1.1"/><rect x="31.23" y="0.00" width="1.1" height="1.1"/><rect x="34.70" y="0.00" width="1.1" height="1.1"/><rect x="38.17" y="0.00" width="1.1" height="1.1"/><rect x="41.64" y="0.00" width="1.1" height="1.1"/><rect x="45.11" y="0.00" width="1.1" height="1.1"/><rect x="48.58" y="0.00" width="1.1" height="1.1"/><rect x="52.05" y="0.00" width="1.1" height="1.1"/><rect x="55.52" y="0.00" width="1.1" height="1.1"/><rect x="58.99" y="0.00" width="1.1" height="1.1"/><rect x="62.46" y="0.00" width="1.1" height="1.1"/><rect x="65.93" y="0.00" width="1.1" height="1.1"/><rect x="69.40" y="0.00" width="1.1" height="1.1"/><rect x="72.87" y="0.00" width="1.1" height="1.1"/><rect x="76.34" y="0.00" width="1.1" height="1.1"/><rect x="79.81" y="0.00" width="1.1" height="1.1"/><rect x="83.28" y="0.00" width="1.1" height="1.1"/><rect x="86.75" y="0.00" width="1.1" height="1.1"/><rect x="90.22" y="0.00" width="1.1" height="1.1"/><rect x="93.69" y="0.00" width="1.1" height="1.1"/><rect x="97.16" y="0.00" width="1.1" height="1.1"/><rect x="1.74" y="1.90" width="1.1" height="1.1"/><rect x="5.21" y="1.90" width="1.1" height="1.1"/><rect x="8.68" y="1.90" width="1.1" height="1.1"/><rect x="12.15" y="1.90" width="1.1" height="1.1"/><rect x="15.62" y="1.90" width="1.1" height="1.1"/><rect x="19.09" y="1.90" width="1.1" height="1.1"/><rect x="22.55" y="1.90" width="1.1" height="1.1"/><rect x="26.02" y="1.90" width="1.1" height="1.1"/><rect x="29.49" y="1.90" width="1.1" height="1.1"/><rect x="32.96" y="1.90" width="1.1" height="1.1"/><rect x="36.43" y="1.90" width="1.1" height="1.1"/><rect x="39.90" y="1.90" width="1.1" height="1.1"/><rect x="43.37" y="1.90" width="1.1" height="1.1"/><rect x="46.84" y="1.90" width="1.1" height="1.1"/><rect x="50.31" y="1.90" width="1.1" height="1.1"/><rect x="53.78" y="1.90" width="1.1" height="1.1"/><rect x="57.25" y="1.90" width="1.1" height="1.1"/><rect x="60.72" y="1.90" width="1.1" height="1.1"/><rect x="64.19" y="1.90" width="1.1" height="1.1"/><rect x="67.66" y="1.90" width="1.1" height="1.1"/><rect x="71.13" y="1.90" width="1.1" height="1.1"/><rect x="74.60" y="1.90" width="1.1" height="1.1"/><rect x="78.07" y="1.90" width="1.1" height="1.1"/><rect x="81.54" y="1.90" width="1.1" height="1.1"/><rect x="85.01" y="1.90" width="1.1" height="1.1"/><rect x="88.48" y="1.90" width="1.1" height="1.1"/><rect x="91.95" y="1.90" width="1.1" height="1.1"/><rect x="95.42" y="1.90" width="1.1" height="1.1"/><rect x="98.89" y="1.90" width="1.1" height="1.1"/><rect x="0.00" y="3.80" width="1.1" height="1.1"/><rect x="3.47" y="3.80" width="1.1" height="1.1"/><rect x="6.94" y="3.80" width="1.1" height="1.1"/><rect x="10.41" y="3.80" width="1.1" height="1.1"/><rect x="13.88" y="3.80" width="1.1" height="1.1"/><rect x="17.35" y="3.80" width="1.1" height="1.1"/><rect x="20.82" y="3.80" width="1.1" height="1.1"/><rect x="24.29" y="3.80" width="1.1" height="1.1"/><rect x="27.76" y="3.80" width="1.1" height="1.1"/><rect x="31.23" y="3.80" width="1.1" height="1.1"/><rect x="34.70" y="3.80" width="1.1" height="1.1"/><rect x="38.17" y="3.80" width="1.1" height="1.1"/><rect x="41.64" y="3.80" width="1.1" height="1.1"/><rect x="45.11" y="3.80" width="1.1" height="1.1"/><rect x="48.58" y="3.80" width="1.1" height="1.1"/><rect x="52.05" y="3.80" width="1.1" height="1.1"/><rect x="55.52" y="3.80" width="1.1" height="1.1"/><rect x="58.99" y="3.80" width="1.1" height="1.1"/><rect x="62.46" y="3.80" width="1.1" height="1.1"/><rect x="65.93" y="3.80" width="1.1" height="1.1"/><rect x="69.40" y="3.80" width="1.1" height="1.1"/><rect x="72.87" y="3.80" width="1.1" height="1.1"/><rect x="76.34" y="3.80" width="1.1" height="1.1"/><rect x="79.81" y="3.80" width="1.1" height="1.1"/><rect x="83.28" y="3.80" width="1.1" height="1.1"/><rect x="86.75" y="3.80" width="1.1" height="1.1"/><rect x="90.22" y="3.80" width="1.1" height="1.1"/><rect x="93.69" y="3.80" width="1.1" height="1.1"/><rect x="97.16" y="3.80" width="1.1" height="1.1"/></g></svg>
<svg style="left:1061.2px;top:533.7px" width="4.8" height="2.4" viewBox="0 0 4.8 2.4" ><path d="M0 0H4.8L2.4 2.4Z" fill="#d6d6d6"/></svg>
<div style="left:866.3px;top:547.200px;width:20.200px;height:18.800px;border:1px solid #7160e8;background:#2c2c2c"></div>
<div style="left:911.2px;top:547.200px;width:20.200px;height:18.800px;border:1px solid #7160e8;background:#2c2c2c"></div>
<svg style="left:869.8px;top:550.3px" width="13" height="13" viewBox="0 0 13 13" ><g fill="none" stroke="#d6d6d6" stroke-width="1"><rect x="0.500" y="0.500" width="4" height="4"/><rect x="0.500" y="8" width="4" height="4"/><path d="M1.500 2.500H3.500M1.500 10H3.500M2.500 9V11M6.500 1H12.500M6.500 3.500H12.500M6.500 6H11M6.500 8.500H12.500M6.500 11H11"/></g></svg>
<span class="t" style="left:890.200px;top:546.600px;font-size:7.600px;font-weight:bold;color:#e8e8e8;line-height:10px;height:10px">A</span>
<span class="t" style="left:890.400px;top:553.600px;font-size:7.600px;font-weight:bold;color:#e8e8e8;line-height:10px;height:10px">Z</span>
<svg style="left:896.6px;top:551.5px" width="6.4" height="9.5" viewBox="0 0 6.4 9.5" ><path d="M3.200 0V8.200M0.500 5.500L3.200 8.400L5.900 5.500" fill="none" stroke="#4fb0f0" stroke-width="1.400"/></svg>
<div style="left:909.2px;top:548.7px;width:1px;height:16.59999999999991px;background:#444"></div>
<svg style="left:914px;top:549.6px" width="14.5" height="14" viewBox="0 0 14.5 14" ><path d="M6 2V0.600H10.400L13.200 3.400V12.600H6V11" fill="none" stroke="#d6d6d6" stroke-width="1"/><path d="M10.200 0.800V3.600H13" fill="none" stroke="#d6d6d6" stroke-width="0.900"/><path d="M1 1.500Q0.300 4.400 2.700 5.200V12M4.400 1.500Q5.100 4.400 2.700 5.200" fill="none" stroke="#d6d6d6" stroke-width="1.200"/></svg>
<svg style="left:934.8px;top:549.5px" width="12" height="14.5" viewBox="0 0 12 14.5" ><path d="M5 0.300H10.800L7.500 5H11.400L2.500 14.200L5 7.600H1Z" fill="#e6bd6e"/><path d="M5.600 2.800H9M3.200 5.800H6.600" stroke="#fff" stroke-width="0.900" opacity="0.850"/></svg>
<div style="left:954.4px;top:548.7px;width:1px;height:16.59999999999991px;background:#444"></div>
<svg style="left:958.8px;top:549.6px" width="14.5" height="14.5" viewBox="0 0 14.5 14.5" ><circle cx="10" cy="4.600" r="4.200" fill="#6a6a6a"/><path d="M7.200 6L1 12.200V14H3.400V12.600H5V11H6.400L8.800 8Z" fill="#6a6a6a"/><circle cx="11.300" cy="3.300" r="1.200" fill="#2a2a2a"/></svg>
<svg style="left:8.7px;top:830.4px" width="14.6" height="14" viewBox="0 0 14.6 14" ><path d="M1.600 0.600H13Q14 0.600 14 1.600V9.600Q14 10.600 13 10.600H9.200L7.300 13L5.400 10.600H1.600Q0.600 10.600 0.600 9.600V1.600Q0.600 0.600 1.600 0.600Z" fill="rgba(255,255,255,0.090)" stroke="#cfcfcf" stroke-width="1.100" stroke-linejoin="round"/></svg>
<svg style="left:747.6px;top:831.8px" width="8.4" height="10.8" viewBox="0 0 8.4 10.8" ><path d="M4.200 10.800V1M0.500 4.600L4.200 0.900L7.900 4.600" fill="none" stroke="#ececec" stroke-width="1.100"/></svg>
<svg style="left:872.6px;top:835.8px" width="6.4" height="3.3" viewBox="0 0 6.4 3.3" ><path d="M0 3.3H6.4L3.2 0Z" fill="#f0f0f0"/></svg>
<svg style="left:899.5px;top:832px" width="12.4" height="11" viewBox="0 0 12.4 11" ><path d="M0.500 0.600H11.900V3.200H0.500ZM1.700 3.400V10.400H10.700V3.400" fill="none" stroke="#ececec" stroke-width="1"/><path d="M4.600 5.200V8.400M7.800 5.200V8.400M4.600 6.800H7.800" stroke="#ececec" stroke-width="0.900" fill="none"/></svg>
<svg style="left:1000.9px;top:835.8px" width="6.4" height="3.3" viewBox="0 0 6.4 3.3" ><path d="M0 3.3H6.4L3.2 0Z" fill="#f0f0f0"/></svg>
<svg style="left:1026.8px;top:830.6px" width="10" height="12.4" viewBox="0 0 10 12.4" ><path d="M0.600 9.800Q2 8.600 2 5Q2.100 0.600 5 0.600Q7.900 0.600 8 5Q8 8.600 9.400 9.800Z" fill="none" stroke="#ececec" stroke-width="1"/><path d="M3.700 10.500Q5 12.300 6.300 10.500" fill="none" stroke="#ececec" stroke-width="0.900"/></svg>
<div style="left:1034.100px;top:835.300px;width:8.800px;height:8.800px;border-radius:50%;background:#f58b9c"></div>
<span class="t" style="left:1036.300px;top:831.800px;font-size:8.200px;font-weight:bold;color:#2a1a4a">2</span>
<svg style="left:1064px;top:834.5px" width="7" height="7" viewBox="0 0 7 7" ><g fill="#8a8a8a"><rect x="5.500" y="0" width="1.200" height="1.200"/><rect x="3.700" y="1.800" width="1.200" height="1.200"/><rect x="5.500" y="1.800" width="1.200" height="1.200"/><rect x="1.900" y="3.600" width="1.200" height="1.200"/><rect x="3.700" y="3.600" width="1.200" height="1.200"/><rect x="5.500" y="3.600" width="1.200" height="1.200"/><rect x="0.100" y="5.400" width="1.200" height="1.200"/><rect x="1.900" y="5.400" width="1.200" height="1.200"/><rect x="3.700" y="5.400" width="1.200" height="1.200"/><rect x="5.500" y="5.400" width="1.200" height="1.200"/></g></svg>
<svg style="left:0;top:0" width="1080" height="852" viewBox="0 0 1080 852"><path d="M105.6 138.5L121.1 141.6L117.2 143.4L151.2 180.600L111.2 150.1L109.4 152.9Z" fill="#fb2114"/><path d="M324 572.5L337.3 564L335.5 568L437.4 570.100L437.4 571.300L336 576.7L337.3 579.7Z" fill="#fb2114"/></svg>
<!-- watermark -->
<svg style="left:598px;top:768px" width="60" height="50" viewBox="0 0 60 50">
<g fill="rgba(255,255,255,0.56)">
<path d="M22 2C10.700 2 2.500 9.200 2.500 18C2.500 23 5.200 27.300 9.300 30.300L7.600 36.600L14.600 33C16.900 33.700 19.400 34 22 34C22.600 34 23.200 34 23.800 33.900C23.300 32.500 23 31.100 23 29.600C23 21.800 30.600 15.600 40 15.600C40.500 15.600 41 15.600 41.400 15.700C39.800 7.900 31.800 2 22 2ZM15.700 11.700A2.300 2.300 0 1 1 15.700 16.300A2.300 2.300 0 1 1 15.700 11.700ZM29.500 11.700A2.300 2.300 0 1 1 29.500 16.300A2.300 2.300 0 1 1 29.500 11.700Z"/>
<path d="M40.700 17.300C32 17.300 24.700 22.800 24.700 30C24.700 37.200 32 43 40.700 43C42.600 43 44.400 42.700 46.100 42.200L51.400 45.200L50 40.200C54.300 37.900 57.200 34.200 57.200 30C57.200 22.800 49.400 17.300 40.700 17.300ZM35.700 24.800A2 2 0 1 1 35.700 28.800A2 2 0 1 1 35.700 24.800ZM46.500 24.800A2 2 0 1 1 46.500 28.800A2 2 0 1 1 46.500 24.800Z"/>
</g></svg>
<span class="wm" style="left:665.200px;top:766.300px;letter-spacing:1.500px">公众号</span>
<span class="wm" style="left:791.500px;top:766.300px;font-size:33px;font-family:'Noto Sans CJK SC','Liberation Sans',sans-serif;letter-spacing:0">·</span>
<span class="wm" style="left:832.500px;top:766.300px;letter-spacing:1.050px">技术老小子</span>

<div id="texts">
<span class="t" style="left:43.7px;top:6.26px;color:#e4e4e4;letter-spacing:-0.452px;">File</span>
<span class="t" style="left:76.7px;top:6.26px;color:#e4e4e4;letter-spacing:-0.402px;">Edit</span>
<span class="t" style="left:111.0px;top:6.26px;color:#e4e4e4;letter-spacing:-0.380px;">View</span>
<span class="t" style="left:150.7px;top:6.26px;color:#e4e4e4;letter-spacing:-0.499px;">Git</span>
<span class="t" style="left:180.7px;top:6.26px;color:#e4e4e4;letter-spacing:-0.230px;">Project</span>
<span class="t" style="left:230.5px;top:6.26px;color:#e4e4e4;letter-spacing:-0.303px;">Build</span>
<span class="t" style="left:271.2px;top:6.26px;color:#e4e4e4;letter-spacing:-0.366px;">Debug</span>
<span class="t" style="left:319.2px;top:6.26px;color:#e4e4e4;letter-spacing:-0.703px;">Test</span>
<span class="t" style="left:353.7px;top:6.26px;color:#e4e4e4;letter-spacing:-0.417px;">Analyze</span>
<span class="t" style="left:407.0px;top:6.26px;color:#e4e4e4;letter-spacing:-0.444px;">Tools</span>
<span class="t" style="left:447.0px;top:6.26px;color:#e4e4e4;letter-spacing:-0.580px;">VisualSVN</span>
<span class="t" style="left:510.7px;top:6.26px;color:#e4e4e4;letter-spacing:-0.403px;">Extensions</span>
<span class="t" style="left:577.0px;top:6.26px;color:#e4e4e4;letter-spacing:-0.068px;">Window</span>
<span class="t" style="left:632.5px;top:6.26px;color:#e4e4e4;letter-spacing:-0.130px;">Help</span>
<span class="t" style="left:676.2px;top:6.26px;color:#cfcfcf;letter-spacing:-0.340px;">Search (Ctrl+Q)</span>
<span class="t" style="left:885.0px;top:6.26px;color:#f0f0f0;letter-spacing:-0.241px;">s87</span>
<span class="t" style="left:248.0px;top:32.76px;color:#f0f0f0;letter-spacing:-0.366px;">Debug</span>
<span class="t" style="left:309.5px;top:32.76px;color:#f0f0f0;letter-spacing:-0.558px;">Any CPU</span>
<span class="t" style="left:424.5px;top:32.76px;color:#e8e8e8;letter-spacing:-0.807px;">s87</span>
<span class="t" style="left:977.0px;top:34.26px;color:#e8e8e8;letter-spacing:-0.562px;">Live Share</span>
<span class="t" style="left:37.0px;top:65.26px;color:#d6d6d6;letter-spacing:-0.246px;">Toolbox</span>
<span class="t" style="left:38.0px;top:83.76px;color:#f0f0f0;letter-spacing:0.316px;">notif</span>
<span class="t" style="left:49.5px;top:103.26px;color:#ececec;letter-spacing:-0.229px;">All Windows Forms</span>
<span class="t" style="left:77.5px;top:120.16px;color:#ececec;letter-spacing:0.018px;">NotifyIcon</span>
<span class="t" style="left:37.5px;top:803.26px;color:#b4b4b4;letter-spacing:-0.501px;">Server Explorer</span>
<span class="t" style="left:116.0px;top:803.26px;color:#ffffff;letter-spacing:-0.317px;">Toolbox</span>
<span class="t" style="left:215.0px;top:65.26px;color:#e6e6e6;letter-spacing:-0.110px;">FrmMain.cs [Design]*</span>
<span class="t" style="left:250.3px;top:103.56px;color:#14142a;letter-spacing:-0.501px;">Form1</span>
<span class="t" style="left:247.5px;top:568.26px;color:#ffffff;letter-spacing:-0.020px;">notifyIcon1</span>
<span class="t" style="left:215.0px;top:628.26px;color:#d6d6d6;letter-spacing:0.013px;">Output</span>
<span class="t" style="left:217.0px;top:648.96px;color:#e4e4e4;letter-spacing:-0.054px;">Show output from:</span>
<span class="t" style="left:215.5px;top:803.76px;color:#b4b4b4;letter-spacing:-0.359px;">Package Manager Console</span>
<span class="t" style="left:347.5px;top:803.76px;color:#b4b4b4;letter-spacing:-0.380px;">Error List</span>
<span class="t" style="left:398.5px;top:803.76px;color:#ffffff;letter-spacing:0.013px;">Output</span>
<span class="t" style="left:867.5px;top:65.26px;color:#d6d6d6;letter-spacing:-0.249px;">Solution Explorer</span>
<span class="t" style="left:868.0px;top:108.26px;color:#d0d0d0;letter-spacing:-0.279px;">Search Solution Explorer (Ctrl+;)</span>
<span class="t" style="left:893.7px;top:126.96px;color:#ececec;letter-spacing:-0.173px;">Solution &#x27;s87&#x27; (1 of 1 project)</span>
<span class="t" style="left:909.5px;top:143.76px;color:#ffffff;letter-spacing:-0.605px;font-weight:bold;">s87</span>
<span class="t" style="left:925.5px;top:160.26px;color:#ececec;letter-spacing:-0.419px;">Dependencies</span>
<span class="t" style="left:925.5px;top:176.76px;color:#ececec;letter-spacing:-0.289px;">FrmMain.cs</span>
<span class="t" style="left:941.0px;top:193.26px;color:#ececec;letter-spacing:-0.289px;">FrmMain.Designer.cs</span>
<span class="t" style="left:941.0px;top:209.46px;color:#ececec;letter-spacing:-0.332px;">FrmMain.resx</span>
<span class="t" style="left:925.5px;top:226.26px;color:#ececec;letter-spacing:-0.320px;">Program.cs</span>
<span class="t" style="left:868.0px;top:481.96px;color:#ffffff;letter-spacing:-0.249px;">Solution Explorer</span>
<span class="t" style="left:956.7px;top:481.96px;color:#b4b4b4;letter-spacing:-0.429px;">Git Changes</span>
<span class="t" style="left:867.5px;top:507.26px;color:#e8e8e8;letter-spacing:-0.372px;">Properties</span>
<span class="t" style="left:868.7px;top:526.26px;color:#ffffff;letter-spacing:-0.236px;font-weight:bold;">notifyIcon1</span>
<span class="t" style="left:930.0px;top:526.26px;color:#e8e8e8;letter-spacing:-0.334px;">System.Windows.Forms.No</span>
<span class="t" style="left:880.7px;top:568.96px;color:#ececec;letter-spacing:-0.405px;">Icon</span>
<span class="t" style="left:988.7px;top:568.96px;color:#ececec;letter-spacing:-0.203px;">(none)</span>
<span class="t" style="left:880.7px;top:585.76px;color:#ececec;letter-spacing:-0.628px;">Text</span>
<span class="t" style="left:966.0px;top:585.76px;color:#ffffff;letter-spacing:-0.263px;font-weight:bold;">notifyIcon1</span>
<span class="t" style="left:880.7px;top:601.96px;color:#ffffff;letter-spacing:-0.488px;font-weight:bold;">Behavior</span>
<span class="t" style="left:880.7px;top:618.26px;color:#ececec;letter-spacing:-0.195px;width:81.6px;overflow:hidden;">ContextMenuStrip</span>
<span class="t" style="left:966.0px;top:618.26px;color:#ececec;letter-spacing:-0.203px;">(none)</span>
<span class="t" style="left:880.7px;top:634.96px;color:#ececec;letter-spacing:-0.332px;">Visible</span>
<span class="t" style="left:966.0px;top:634.96px;color:#ffffff;letter-spacing:-0.203px;font-weight:bold;">True</span>
<span class="t" style="left:880.7px;top:651.46px;color:#ffffff;letter-spacing:-0.402px;font-weight:bold;">Data</span>
<span class="t" style="left:880.7px;top:667.96px;color:#ececec;letter-spacing:-0.874px;">Tag</span>
<span class="t" style="left:880.7px;top:684.76px;color:#ffffff;letter-spacing:-0.617px;font-weight:bold;">Design</span>
<span class="t" style="left:880.7px;top:701.26px;color:#ffffff;letter-spacing:-0.450px;">(Name)</span>
<span class="t" style="left:966.0px;top:701.26px;color:#ffffff;letter-spacing:-0.263px;font-weight:bold;">notifyIcon1</span>
<span class="t" style="left:880.7px;top:717.76px;color:#ececec;letter-spacing:-0.380px;">GenerateMember</span>
<span class="t" style="left:966.0px;top:717.76px;color:#ececec;letter-spacing:-0.578px;">True</span>
<span class="t" style="left:870.0px;top:740.96px;color:#79b8ea;letter-spacing:-0.366px;text-decoration:underline;text-underline-offset:1px;">Choose Icon...</span>
<span class="t" style="left:869.0px;top:770.26px;color:#f4f4f4;letter-spacing:-0.268px;font-weight:bold;">(Name)</span>
<span class="t" style="left:869.0px;top:785.96px;color:#e8e8e8;letter-spacing:-0.249px;">Indicates the name used in code to</span>
<span class="t" style="left:869.0px;top:799.26px;color:#e8e8e8;letter-spacing:-0.077px;">identify the object.</span>
<span class="t" style="left:29.5px;top:829.26px;color:#f4f4f4;letter-spacing:-0.644px;">Ready</span>
<span class="t" style="left:764.5px;top:829.26px;color:#f4f4f4;letter-spacing:-0.202px;">Add to Source Control</span>
<span class="t" style="left:917.5px;top:829.26px;color:#f4f4f4;letter-spacing:-0.390px;">Select Repository</span>
</div>
</body></html>
